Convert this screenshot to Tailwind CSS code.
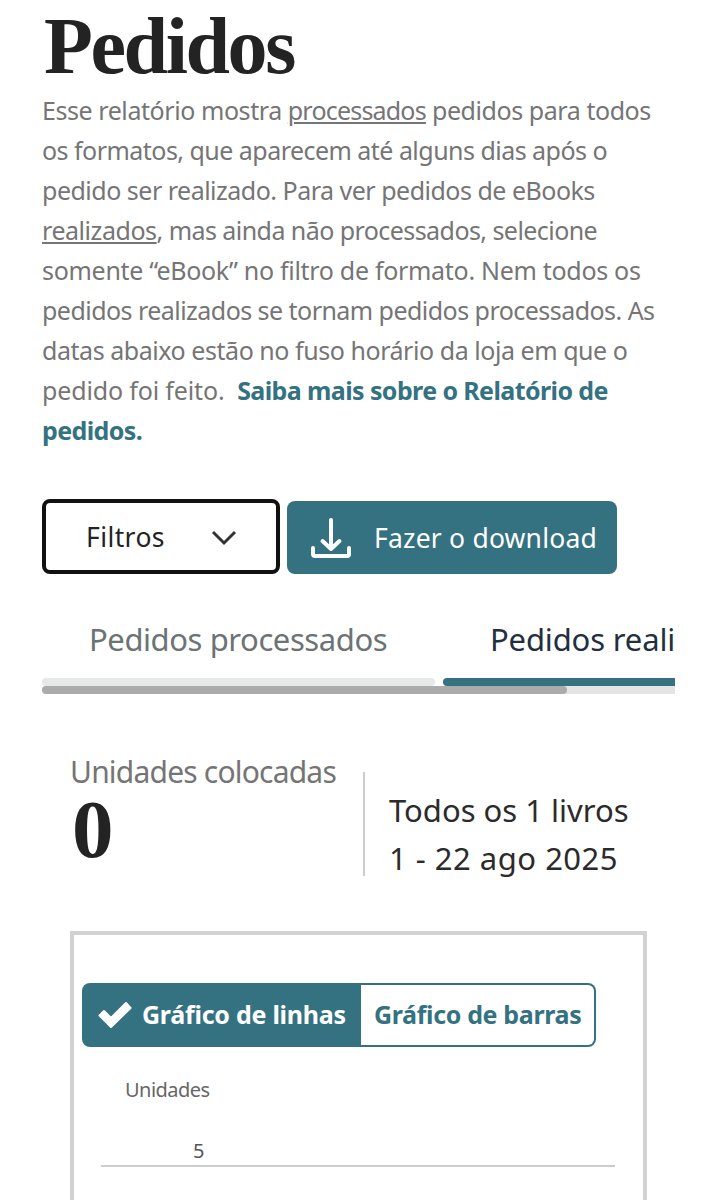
<!DOCTYPE html>
<html lang="pt-BR">
<head>
    <meta charset="UTF-8">
    <meta name="viewport" content="width=device-width, initial-scale=1.0">
    <title>Pedidos</title>
    <script src="https://cdn.jsdelivr.net/npm/@tailwindcss/browser@4"></script>
</head>
<body class="bg-white font-['Noto_Sans','Open_Sans',sans-serif] text-[#232323]">
    <div class="h-[1200px] overflow-hidden pl-[42px]">
        <h1 class="h-[90px] pl-[2px] leading-[92px] text-[80px] font-bold tracking-[-2.4px] font-['Liberation_Serif',serif]">Pedidos</h1>

        <p class="h-[361px] text-[25px] leading-[40px] text-[#757575] whitespace-nowrap">
            <span class="block tracking-[-0.43px]">Esse relatório mostra <span class="underline decoration-2 underline-offset-2 tracking-[-0.8px]">processados</span> pedidos para todos</span>
            <span class="block tracking-[-0.53px]">os formatos, que aparecem até alguns dias após o</span>
            <span class="block tracking-[-0.5px]">pedido ser realizado. Para ver pedidos de eBooks</span>
            <span class="block tracking-[-0.56px]"><span class="underline decoration-2 underline-offset-2 tracking-[-0.45px]">realizados</span>, mas ainda não processados, selecione</span>
            <span class="block tracking-[-0.3px]">somente “eBook” no filtro de formato. Nem todos os</span>
            <span class="block tracking-[-0.54px]">pedidos realizados se tornam pedidos processados. As</span>
            <span class="block tracking-[-0.45px]">datas abaixo estão no fuso horário da loja em que o</span>
            <span class="block tracking-[-0.15px]">pedido foi feito.&nbsp; <a class="font-bold text-[#347282] tracking-[-0.6px]">Saiba mais sobre o Relatório de</a></span>
            <a class="block font-bold text-[#347282] tracking-[-0.6px]">pedidos.</a>
        </p>

        <div class="mt-12 flex gap-[7px] h-[75px] items-end">
            <button class="flex items-center h-[75px] w-[238px] rounded-lg border-4 border-[#111] pl-[40px] pr-[39px] justify-between text-[26.5px] tracking-[0.4px]">
                <span class="pt-0.5">Filtros</span>
                <svg class="w-[26px] h-[16px] mt-[3px]" viewBox="0 0 26 16" fill="none" stroke="#333" stroke-width="3"><path d="M2 2l11 11L24 2"/></svg>
            </button>
            <button class="flex items-center h-[73px] w-[330px] rounded-lg bg-[#347282] text-white pl-[23px] text-[26.5px] tracking-[0.2px] whitespace-nowrap">
                <svg class="w-[42px] h-[42px] mt-px mr-[22px]" viewBox="0 0 42 42" fill="none" stroke="currentColor" stroke-width="4" stroke-linecap="round" stroke-linejoin="round"><path d="M21 3v29M12.500 24l8.500 8 8.500-8M3 31v6a2 2 0 0 0 2 2h32a2 2 0 0 0 2-2v-6"/></svg>
                <span class="pt-[3px]">Fazer o download</span>
            </button>
        </div>

        <!-- abas com rolagem horizontal -->
        <div class="mt-[30px] w-[633px] overflow-hidden text-[31px]">
            <div class="flex gap-2 w-[820px]">
                <div class="w-[393px] shrink-0">
                    <div class="h-[74px] leading-[70px] pl-[47px] text-[#6b7374] tracking-[-0.42px]">Pedidos processados</div>
                    <div class="h-2 rounded-full bg-[#e7e8e8]"></div>
                </div>
                <div class="w-[393px] shrink-0">
                    <div class="h-[74px] leading-[70px] pl-[47px] text-[#232f3e] tracking-[-0.15px]">Pedidos realizados</div>
                    <div class="h-2 rounded-full bg-[#347282]"></div>
                </div>
            </div>
            <div class="h-2 bg-[#e4e4e4] rounded-l-full"><div class="h-2 w-[525px] rounded-full bg-[#ababab]"></div></div>
        </div>

        <div class="mt-[57px] ml-[28px] flex h-[180px]">
            <div class="w-[293px]">
                <div class="h-[40px] leading-[42px] text-[30px] text-[#757575] tracking-[-0.8px] whitespace-nowrap">Unidades colocadas</div>
                <div class="h-[80px] leading-[77px] pl-[2px] text-[83px] font-bold font-['Liberation_Serif',serif]">0</div>
            </div>
            <div class="mt-[21px] h-[104px] w-[302px] border-l-2 border-[#ccc] pl-[24px] pt-[14px] text-[31px] leading-[48px] text-[#2b2b2b] whitespace-nowrap">
                <div>Todos os 1 livros</div>
                <div class="tracking-[0.5px]">1 - 22 ago 2025</div>
            </div>
        </div>

        <div class="ml-[28px] w-[577px] h-[300px] border-4 border-[#d2d2d2] pt-12 pl-2">
            <div class="flex w-[514px] h-[64px] text-[25px] font-bold whitespace-nowrap">
                <div class="flex items-center w-[279px] rounded-l-lg bg-[#347282] text-white pl-4 tracking-[-0.25px]">
                    <svg class="w-[34px] h-[28px] mr-[10px]" viewBox="0 0 34 28" fill="currentColor" stroke="currentColor" stroke-width="2" stroke-linejoin="round"><path d="M1.500 14.500L6 10l7 7L28 2l4.500 5L13 26z"/></svg>
                    <span>Gráfico de linhas</span>
                </div>
                <div class="flex items-center w-[235px] rounded-r-lg border-2 border-l-0 border-[#347282] text-[#347282] pl-[13px] tracking-[-0.35px]">Gráfico de barras</div>
            </div>
            <div class="mt-[28px] pl-[43px] text-[20px] leading-[30px] tracking-[-0.55px] text-[#666]">Unidades</div>
            <div class="mt-[30px] ml-[19px] w-[514px] h-[32px] border-b-2 border-[#ccc] pl-[92px] text-[20px] leading-[32px] text-[#555]">5</div>
        </div>
    </div>
</body>
</html>
